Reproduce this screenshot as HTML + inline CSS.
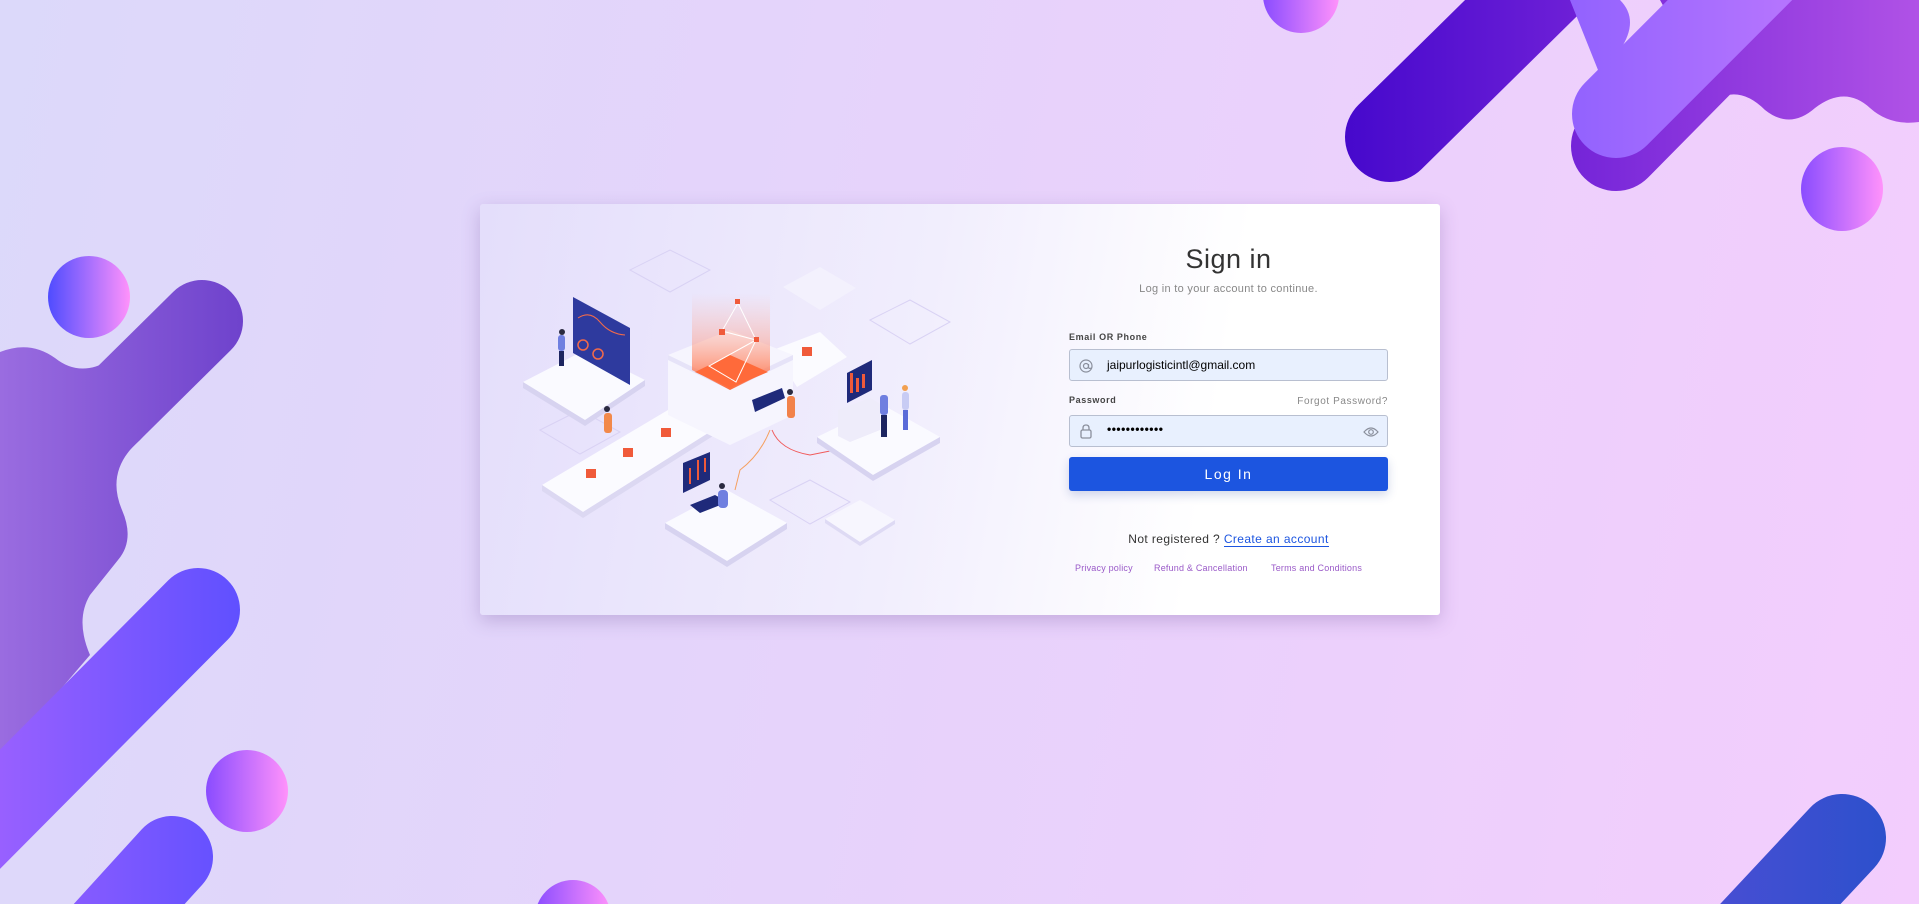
<!DOCTYPE html>
<html><head><meta charset="utf-8"><style>
*{margin:0;padding:0;box-sizing:border-box}
html,body{width:1919px;height:904px;overflow:hidden}
body{position:relative;font-family:"Liberation Sans",sans-serif;background:linear-gradient(100deg,#dcd9fa 0%,#e6d3fb 45%,#f3cdfd 100%)}
#bg{position:absolute;left:0;top:0}
.card{position:absolute;left:480px;top:204px;width:960px;height:411px;border-radius:3px;background:linear-gradient(100deg,#e4defb 0%,#f1eefd 45%,#ffffff 75%);box-shadow:0 6px 18px rgba(90,60,140,.25)}
#ill{position:absolute;left:0;top:0}
.f{position:absolute;left:1069px;width:319px}
.title{position:absolute;left:1069px;width:319px;top:244px;text-align:center;font-size:27px;color:#333;letter-spacing:.5px}
.sub{position:absolute;left:1069px;width:319px;top:283px;text-align:center;font-size:11px;color:#888;letter-spacing:.3px}
.lbl{font-size:9px;font-weight:bold;color:#444;letter-spacing:.6px}
.inp{height:32px;background:#e8f0fe;border:1px solid #b8bfd0;border-radius:3px}
.inp span{position:absolute;left:37px;top:8px;font-size:12px;color:#000}
.btn{top:457px;height:34px;background:#1c55e0;border-radius:3px;color:#fff;text-align:center;line-height:34px;font-size:14px;letter-spacing:1.5px;box-shadow:0 4px 10px rgba(30,60,150,.2)}
.reg{position:absolute;left:1069px;width:319px;top:532px;text-align:center;font-size:12px;color:#333;letter-spacing:.4px}
.reg a{color:#1c55e0;text-decoration:none;border-bottom:1px solid #1c55e0}
.links{position:absolute;top:563px;font-size:9px;color:#9a5ac8;letter-spacing:.2px}
</style></head><body>
<svg id="bg" width="1919" height="904" viewBox="0 0 1919 904">
<defs>
<linearGradient id="gc" x1="0" x2="1"><stop offset="0" stop-color="#8a4cff"/><stop offset="1" stop-color="#ff92fb"/></linearGradient>
<linearGradient id="gc2" x1="0" x2="1"><stop offset="0" stop-color="#4f4cff"/><stop offset="1" stop-color="#ff92fb"/></linearGradient>
<linearGradient id="gd" gradientUnits="userSpaceOnUse" x1="1340" x2="1600"><stop offset="0" stop-color="#4508cc"/><stop offset="1" stop-color="#7222d8"/></linearGradient>
<linearGradient id="gl" gradientUnits="userSpaceOnUse" x1="1570" x2="1780"><stop offset="0" stop-color="#9262fe"/><stop offset="1" stop-color="#b474fe"/></linearGradient>
<linearGradient id="gm" gradientUnits="userSpaceOnUse" x1="1570" x2="1919"><stop offset="0" stop-color="#7424d8"/><stop offset="1" stop-color="#b052e6"/></linearGradient>
<linearGradient id="gb" gradientUnits="userSpaceOnUse" x1="0" x2="245"><stop offset="0" stop-color="#9a6ce0"/><stop offset="1" stop-color="#6e42cc"/></linearGradient>
<linearGradient id="gv" gradientUnits="userSpaceOnUse" x1="0" x2="240"><stop offset="0" stop-color="#9860ff"/><stop offset="1" stop-color="#6050ff"/></linearGradient>
<linearGradient id="gbl" gradientUnits="userSpaceOnUse" x1="1700" x2="1890"><stop offset="0" stop-color="#4a4ed4"/><stop offset="1" stop-color="#2c50cc"/></linearGradient>
</defs>
<!-- top right -->
<circle cx="1301" cy="-5" r="38" fill="url(#gc)"/>
<line x1="1390" y1="137" x2="1580" y2="-50" stroke="url(#gd)" stroke-width="90" stroke-linecap="round"/>
<path d="M1660,0 L1919,0 L1919,122 Q1890,126 1870,108 Q1845,85 1815,108 Q1790,130 1765,110 Q1740,85 1715,100 Z" fill="url(#gm)"/>
<line x1="1616" y1="146" x2="1780" y2="-20" stroke="url(#gm)" stroke-width="90" stroke-linecap="round"/>
<line x1="1616" y1="114" x2="1780" y2="-50" stroke="url(#gl)" stroke-width="88" stroke-linecap="round"/>
<path d="M1570,0 L1620,0 Q1640,20 1620,50 L1600,75 Z" fill="url(#gl)"/>
<ellipse cx="1842" cy="189" rx="41" ry="42" fill="url(#gc)"/>
<!-- left -->
<path d="M0,352 Q30,340 55,358 Q80,378 110,360 L205,280 L240,330 L140,440 Q105,470 122,510 Q135,540 118,560 L90,595 Q75,620 90,655 L0,760 Z" fill="url(#gb)"/>
<line x1="202" y1="321" x2="-40" y2="560" stroke="url(#gb)" stroke-width="82" stroke-linecap="round"/>
<ellipse cx="89" cy="297" rx="41" ry="41" fill="url(#gc2)"/>
<line x1="198" y1="610" x2="-120" y2="930" stroke="url(#gv)" stroke-width="84" stroke-linecap="round"/>
<line x1="172" y1="857" x2="60" y2="980" stroke="url(#gv)" stroke-width="82" stroke-linecap="round"/>
<ellipse cx="247" cy="791" rx="41" ry="41" fill="url(#gc)"/>
<circle cx="573" cy="918" r="38" fill="url(#gc)"/>
<line x1="1842" y1="838" x2="1700" y2="990" stroke="url(#gbl)" stroke-width="88" stroke-linecap="round"/>
</svg>
<div class="card"></div>
<svg id="ill" width="1919" height="904" viewBox="0 0 1919 904">
<defs>
<linearGradient id="pr" x1="0" y1="0" x2="0" y2="1"><stop offset="0" stop-color="#ffb0a0" stop-opacity="0"/><stop offset=".5" stop-color="#ff9a80" stop-opacity=".45"/><stop offset="1" stop-color="#ff6a3a"/></linearGradient>
<linearGradient id="gw" x1="0" x2="1"><stop offset="0" stop-color="#ffb070" stop-opacity=".1"/><stop offset="1" stop-color="#ff8a4a"/></linearGradient>
</defs>
<g fill="none" stroke="#d9d2f4" stroke-width="1">
<path d="M630,270 L670,250 L710,270 L670,292 Z M870,320 L910,300 L950,322 L910,344 Z M540,430 L580,410 L620,432 L580,454 Z M770,500 L810,480 L850,502 L810,524 Z"/>
</g>
<!-- empty platforms -->
<path d="M783,287 L820,267 L856,288 L820,310 Z" fill="#f3f1fd"/>
<path d="M825,519 L860,500 L895,520 L860,542 Z" fill="#f7f6fe"/><path d="M825,519 L860,542 L895,520 L895,524 L860,546 L825,523Z" fill="#dedaf4"/>
<!-- left platform -->
<path d="M523,382 L585,350 L645,380 L585,420 L523,386Z" fill="#fafaff"/><path d="M523,382 L585,420 L645,380 L645,386 L585,426 L523,388Z" fill="#d7d3f0"/>
<path d="M573,297 L630,328 L630,385 L573,353Z" fill="#2e3a9e"/>
<path d="M578,318 Q590,310 600,322 T625,335" stroke="#f26a4a" fill="none" stroke-width="1"/>
<circle cx="583" cy="345" r="5" fill="none" stroke="#f26a4a" stroke-width="1.5"/><circle cx="598" cy="354" r="5" fill="none" stroke="#f26a4a" stroke-width="1.5"/>
<rect x="558" y="335" width="7" height="16" rx="3" fill="#6f7fe0"/><rect x="559" y="351" width="5" height="15" fill="#1d2560"/><circle cx="562" cy="332" r="3" fill="#2a2a40"/>
<!-- belt -->
<path d="M542,485 L673,407 L713,430 L583,512Z" fill="#fbfbff"/><path d="M542,485 L583,512 L713,430 L713,436 L583,518 L542,491Z" fill="#dcd8f2"/>
<path d="M773,350 L820,332 L847,357 L797,387Z" fill="#fbfbff"/>
<rect x="586" y="469" width="10" height="9" fill="#f05a3a"/><rect x="623" y="448" width="10" height="9" fill="#f05a3a"/><rect x="661" y="428" width="10" height="9" fill="#f05a3a"/><rect x="802" y="347" width="10" height="9" fill="#f05a3a"/><rect x="783" y="358" width="9" height="8" fill="#f08a4a"/>
<path d="M672,405 L700,392 L720,400 L690,420Z" fill="url(#gw)"/>
<rect x="604" y="413" width="8" height="20" rx="3" fill="#f2894a"/><circle cx="607" cy="409" r="3" fill="#2a2a40"/>
<!-- machine -->
<path d="M668,355 L730,330 L793,355 L793,415 L730,445 L668,415Z" fill="#f6f5fe"/>
<path d="M668,355 L730,385 L793,355 L793,360 L730,390 L668,360Z" fill="#e6e3f8"/>
<path d="M692,293 L770,293 L770,370 L730,390 L692,370Z" fill="url(#pr)"/>
<path d="M695,372 L730,355 L768,372 L730,388Z" fill="#ff6a3a"/>
<g stroke="#fff" stroke-width="1" fill="none"><path d="M738,303 L756,340 L736,382 L709,366 L756,340 M738,303 L722,331 L756,340"/></g>
<rect x="735" y="299" width="5" height="5" fill="#f05a3a"/><rect x="719" y="329" width="6" height="6" fill="#f05a3a"/><rect x="754" y="337" width="5" height="5" fill="#f05a3a"/>
<path d="M752,400 L782,388 L785,398 L755,412Z" fill="#1f2a7a"/>
<rect x="787" y="396" width="8" height="22" rx="3" fill="#f2824a"/><circle cx="790" cy="392" r="3" fill="#2a2a40"/>
<path d="M772,430 Q780,450 810,455 L835,450" stroke="#f05a5a" fill="none" stroke-width="1"/>
<path d="M770,430 Q760,455 740,470 L735,490" stroke="#f5a060" fill="none" stroke-width="1"/>
<!-- right platform -->
<path d="M817,437 L883,405 L940,437 L873,475Z" fill="#fafaff"/><path d="M817,437 L873,475 L940,437 L940,443 L873,481 L817,443Z" fill="#d7d3f0"/>
<path d="M847,373 L872,360 L872,390 L847,403Z" fill="#1f2a7a"/>
<rect x="850" y="373" width="3" height="20" fill="#f05a3a"/><rect x="856" y="378" width="3" height="14" fill="#f05a3a"/><rect x="862" y="374" width="3" height="14" fill="#f05a3a"/>
<path d="M838,410 L870,398 L880,404 L880,430 L850,442 L838,436Z" fill="#eeecfa"/>
<rect x="880" y="395" width="8" height="20" rx="3" fill="#6f7fe0"/><rect x="881" y="415" width="6" height="22" fill="#1d2560"/>
<rect x="902" y="392" width="7" height="18" rx="3" fill="#c8ccf4"/><rect x="903" y="410" width="5" height="20" fill="#5a6ad8"/><circle cx="905" cy="388" r="3" fill="#f2a050"/>
<!-- bottom platform -->
<path d="M665,523 L727,490 L787,523 L727,561Z" fill="#fafaff"/><path d="M665,523 L727,561 L787,523 L787,529 L727,567 L665,529Z" fill="#d7d3f0"/>
<path d="M683,463 L710,452 L710,480 L683,493Z" fill="#1f2a7a"/>
<rect x="689" y="468" width="2" height="16" fill="#f05a3a"/><rect x="697" y="460" width="2" height="20" fill="#f05a3a"/><rect x="704" y="458" width="2" height="14" fill="#f05a3a"/>
<path d="M690,505 L715,495 L728,502 L700,513Z" fill="#1f2a7a"/>
<rect x="718" y="490" width="10" height="18" rx="4" fill="#6f7fe0"/><circle cx="722" cy="486" r="3" fill="#2a2a40"/>
</svg>
<div class="title">Sign in</div>
<div class="sub">Log in to your account to continue.</div>
<div class="f lbl" style="top:332px">Email OR Phone</div>
<div class="f inp" style="top:349px">
<svg style="position:absolute;left:8px;top:8px" width="16" height="16" viewBox="0 0 16 16"><circle cx="8" cy="8" r="6" fill="none" stroke="#8a8f9c" stroke-width="1.2"/><circle cx="8" cy="8" r="2.5" fill="none" stroke="#8a8f9c" stroke-width="1.2"/><path d="M10.5,6 L10.5,9.5 Q11,11 13.5,10" fill="none" stroke="#8a8f9c" stroke-width="1.2"/></svg>
<span>jaipurlogisticintl@gmail.com</span></div>
<div class="f lbl" style="top:395px">Password</div>
<div class="f" style="top:396px;text-align:right;font-size:10px;color:#888;letter-spacing:.6px">Forgot Password?</div>
<div class="f inp" style="top:415px">
<svg style="position:absolute;left:8px;top:7px" width="16" height="16" viewBox="0 0 16 16"><rect x="3" y="7" width="10" height="8" rx="1.5" fill="none" stroke="#8a8f9c" stroke-width="1.3"/><path d="M5,7 V5 Q5,2 8,2 Q11,2 11,5 V7" fill="none" stroke="#8a8f9c" stroke-width="1.3"/></svg>
<span style="top:6px;letter-spacing:.5px;font-weight:bold">••••••••••••</span>
<svg style="position:absolute;right:8px;top:9px" width="16" height="14" viewBox="0 0 16 14"><path d="M1,7 Q8,-1 15,7 Q8,15 1,7Z" fill="none" stroke="#8a8f9c" stroke-width="1.2"/><circle cx="8" cy="7" r="2.3" fill="none" stroke="#8a8f9c" stroke-width="1.2"/></svg>
</div>
<div class="f btn">Log In</div>
<div class="reg">Not registered ? <a>Create an account</a></div>
<div class="links" style="left:1075px">Privacy policy</div>
<div class="links" style="left:1154px">Refund &amp; Cancellation</div>
<div class="links" style="left:1271px">Terms and Conditions</div>
</body></html>
